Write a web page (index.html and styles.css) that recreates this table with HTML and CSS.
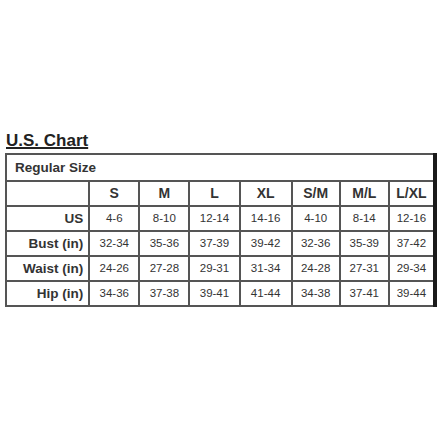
FILE: index.html
```html
<!DOCTYPE html>
<html lang="en">
<head>
    <meta charset="UTF-8">
    <meta name="viewport" content="width=device-width, initial-scale=1.0">
    <title>U.S. Chart</title>
    <link rel="stylesheet" href="styles.css">
</head>
<body>
    <div class="chart">
        <h2 class="chart-title">U.S. Chart</h2>
        <table class="size-table">
            <colgroup>
                <col class="col-label">
                <col class="col-std">
                <col class="col-std">
                <col class="col-std">
                <col class="col-xl">
                <col class="col-sm">
                <col class="col-ml">
                <col class="col-lxl">
            </colgroup>
            <tr class="caption-row">
                <td colspan="8">Regular Size</td>
            </tr>
            <tr class="head-row">
                <td></td>
                <th>S</th>
                <th>M</th>
                <th>L</th>
                <th>XL</th>
                <th>S/M</th>
                <th>M/L</th>
                <th>L/XL</th>
            </tr>
            <tr>
                <th class="label">US</th>
                <td>4-6</td>
                <td>8-10</td>
                <td>12-14</td>
                <td>14-16</td>
                <td>4-10</td>
                <td>8-14</td>
                <td>12-16</td>
            </tr>
            <tr>
                <th class="label">Bust (in)</th>
                <td>32-34</td>
                <td>35-36</td>
                <td>37-39</td>
                <td>39-42</td>
                <td>32-36</td>
                <td>35-39</td>
                <td>37-42</td>
            </tr>
            <tr>
                <th class="label">Waist (in)</th>
                <td>24-26</td>
                <td>27-28</td>
                <td>29-31</td>
                <td>31-34</td>
                <td>24-28</td>
                <td>27-31</td>
                <td>29-34</td>
            </tr>
            <tr>
                <th class="label">Hip (in)</th>
                <td>34-36</td>
                <td>37-38</td>
                <td>39-41</td>
                <td>41-44</td>
                <td>34-38</td>
                <td>37-41</td>
                <td>39-44</td>
            </tr>
        </table>
    </div>
</body>
</html>
```

FILE: styles.css
```css
/* size chart */
body {
    margin: 0;
    padding: 0;
    background-color: #fff;
    font-family: "Liberation Sans", Arial, sans-serif;
    color: #333;
}
.chart {
    padding: 131px 4px 0 5px;
}
.chart-title {
    margin: 0 0 2px 1px;
    font-size: 17px;
    font-weight: bold;
    line-height: 20px;
    text-decoration: underline;
    text-decoration-thickness: 2px;
    text-underline-offset: 1px;
    color: #222;
}
.size-table {
    border-collapse: collapse;
    width: 432px;
    table-layout: fixed;
    border-right: 4px solid #1a1a1a;
}
.col-label { width: 83px; }
.col-std { width: 50px; }
.col-xl { width: 52px; }
.col-sm { width: 48px; }
.col-ml { width: 49px; }
.col-lxl { width: 46px; }
.size-table td,
.size-table th {
    border: 2px solid #555;
    padding: 0;
    text-align: center;
    line-height: 23px;
    font-size: 11.5px;
    font-weight: normal;
    white-space: nowrap;
}
.size-table th {
    font-weight: bold;
    font-size: 14px;
}
.caption-row td {
    text-align: left;
    padding-left: 8px;
    font-weight: bold;
    font-size: 13.5px;
    line-height: 25px;
}
.size-table .label {
    text-align: right;
    padding-right: 5px;
    font-size: 13.5px;
}
```
